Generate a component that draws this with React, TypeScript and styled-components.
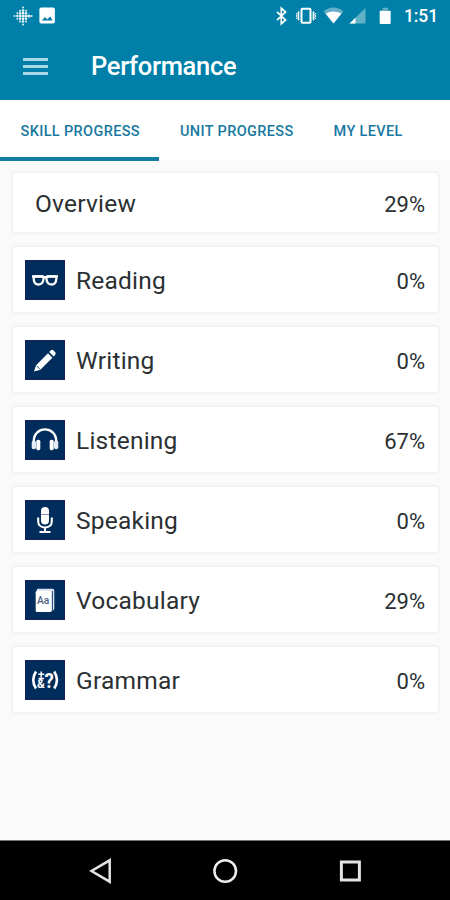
import React from 'react';
import styled, { createGlobalStyle } from 'styled-components';

const GlobalStyle = createGlobalStyle`
  *, *::before, *::after { box-sizing: border-box; }
  body { margin: 0; background: #fafafa; font-family: Roboto, sans-serif; }
`;

const Screen = styled.div`
  width: 450px;
  height: 900px;
  display: flex;
  flex-direction: column;
  overflow: hidden;
  background: #fafafa;
`;

const StatusBar = styled.header`
  height: 32px;
  flex: none;
  display: flex;
  align-items: center;
  padding: 0 13px 0 13px;
  background: #0080a9;
  color: #fff;
`;

const StatusIcons = styled.div<{ $push?: boolean }>`
  display: flex;
  align-items: center;
  height: 32px;
  margin-left: ${(p) => (p.$push ? 'auto' : '0')};
  svg { display: block; }
`;

const Clock = styled.span`
  width: 33px;
  margin-left: 11px;
  font-size: 17.5px;
  line-height: 32px;
  font-weight: 500;
  letter-spacing: -0.1px;
  white-space: nowrap;
`;

const AppBar = styled.div`
  height: 68px;
  flex: none;
  display: flex;
  align-items: center;
  padding: 0 23px;
  background: #0080a9;
`;

const MenuButton = styled.button`
  width: 25px;
  height: 17px;
  padding: 0;
  margin: 0 42px 0 0;
  border: 0;
  background: none;
  display: flex;
  flex-direction: column;
  justify-content: space-between;
`;

const MenuLine = styled.span`
  height: 3px;
  background: #a9d8e8;
`;

const Title = styled.h1`
  margin: 0;
  padding: 1px 0 0 1px;
  color: #fff;
  font-size: 25.5px;
  line-height: 67px;
  font-weight: 500;
  letter-spacing: -0.3px;
`;

const Tabs = styled.nav`
  height: 60px;
  flex: none;
  display: flex;
  background: #fff;
`;

const Tab = styled.button<{ $active?: boolean }>`
  height: 61px;
  padding: 4px 19.5px 0 20.5px;
  border: 0;
  border-bottom: 4px solid ${(p) => (p.$active ? '#147ca2' : 'transparent')};
  background: none;
  color: #1879a0;
  font: 500 14.5px/55px Roboto, sans-serif;
  letter-spacing: 0.36px;
  white-space: nowrap;
`;

const List = styled.main`
  flex: 1;
  display: flex;
  flex-direction: column;
  gap: 11px;
  padding: 11px 10px 0 11px;
`;

const Card = styled.section<{ $compact?: boolean }>`
  height: ${(p) => (p.$compact ? '63px' : '69px')};
  display: flex;
  align-items: center;
  padding: 1px 13px 0 ${(p) => (p.$compact ? '22px' : '12px')};
  border: 2px solid #f3f3f3;
  border-radius: 5px;
  background: #fff;
`;

const IconTile = styled.div`
  width: 40px;
  height: 40px;
  margin-right: 11px;
  background: #002d5b;
  border: 1px solid #15205c;
  svg { display: block; width: 38px; height: 38px; }
`;

const Label = styled.span`
  flex: 1;
  color: #2b3033;
  font-size: 24.5px;
  line-height: 30px;
  padding-top: 2px;
  letter-spacing: 0.22px;
`;

const Value = styled.span`
  color: #2b3033;
  font-size: 22px;
  line-height: 30px;
  padding-top: 4px;
`;

const NavBar = styled.footer`
  height: 60px;
  flex: none;
  display: flex;
  align-items: center;
  justify-content: space-between;
  padding: 0 87px;
  background: #000;
  border-top: 1px solid #777;
`;

const dots: [number, number, number][] = [
  [10, 1.5, 1], [10, 4.6, 1.3], [7, 7.2, 1.2], [10, 7.2, 1.4], [13, 7.2, 1.2],
  [1.5, 10, 1], [4.3, 10, 1.2], [7, 10, 1.4], [10, 10, 1.6], [13, 10, 1.6], [16, 10, 1.6], [18.6, 10, 1],
  [7, 12.8, 1.2], [10, 12.8, 1.4], [13, 12.8, 1.2], [10, 15.5, 1.3], [10, 18.5, 1],
  [7, 4.8, 1], [13, 4.8, 1], [7, 15.4, 1], [13, 15.4, 1], [4.3, 7.2, 0.9], [4.3, 12.8, 0.9],
];

const Glyphs: Record<string, React.ReactNode> = {
  Reading: (
    <g fill="none" stroke="#fff">
      <path d="M6 15.4h10q3 1.5 6 0h10" strokeWidth="2.2" />
      <path d="M8.5 15.5h8q1.4 0 1.1 2-.6 6-5.1 6T7.7 18q-.2-2.5.8-2.5zM21.5 15.5h8q1 0 .8 2.5-.3 5.5-4.8 5.5t-5.1-6q-.3-2 1.1-2z" strokeWidth="2.3" />
    </g>
  ),
  Writing: (
    <g fill="#fff">
      <path d="m8 30.5 2.1-6.2L22 12.3l4.4 4.4-12 12z" />
      <path d="m23.2 11.1 1.5-1.6q1.4-1.3 2.8 0l1.6 1.6q1.3 1.4 0 2.8l-1.5 1.6z" />
      <path d="m10.5 24.7 3.5 3.5" stroke="#002d5b" strokeWidth=".8" />
    </g>
  ),
  Listening: (
    <g fill="#fff">
      <path d="M7.8 23v-3C7.8 4.5 30.2 4.5 30.2 20v3" fill="none" stroke="#fff" strokeWidth="2.4" />
      <rect x="5.7" y="19.5" width="4.3" height="8.8" rx="2" fill="#e4e8f3" />
      <rect x="10.3" y="18.7" width="4" height="10.5" rx="1.6" />
      <rect x="23.7" y="18.7" width="4" height="10.5" rx="1.6" />
      <rect x="28" y="19.5" width="4.3" height="8.8" rx="2" fill="#e4e8f3" />
    </g>
  ),
  Speaking: (
    <g>
      <rect x="15" y="6" width="8" height="17.5" rx="4" fill="#fff" />
      <path d="M12.2 16.5v4c0 8 13.6 8 13.6 0v-4M19 26.5V31M13.5 31h11" fill="none" stroke="#fff" strokeWidth="2.1" />
      <path d="M15 13.5h8" stroke="#60769b" strokeWidth=".8" />
    </g>
  ),
  Vocabulary: (
    <g>
      <path d="M12 7.8h14.5q1.8 0 1.8 1.8v18q0 1.8-1.8 1.8H25V10H10.5q.1-2.2 1.5-2.2z" fill="#dbe0f2" />
      <rect x="9.7" y="9.7" width="15.9" height="21.2" rx="1.5" fill="#fff" />
      <path d="M26.4 10v19" stroke="#174374" />
      <text x="11" y="22.8" fill="#49617f" fontFamily="Roboto" fontSize="10.2" fontWeight="500">Aa</text>
    </g>
  ),
  Grammar: (
    <g fill="#fff" fontFamily="Roboto" fontWeight="700">
      <path d="M10 10.5q-5.5 8.5 0 17M28.2 10.5q5.5 8.5 0 17" fill="none" stroke="#fff" strokeWidth="2.6" />
      <path d="M15.2 10.5v6M12.3 13.3h6M12.5 17.5h5.5" stroke="#fff" strokeWidth="1.5" />
      <text x="11" y="27" fontSize="12">&amp;</text>
      <text x="18.6" y="26.8" fontSize="21" textLength="9.3" lengthAdjust="spacingAndGlyphs">?</text>
    </g>
  ),
};

const skills = [
  { name: 'Reading', value: '0%' },
  { name: 'Writing', value: '0%' },
  { name: 'Listening', value: '67%' },
  { name: 'Speaking', value: '0%' },
  { name: 'Vocabulary', value: '29%' },
  { name: 'Grammar', value: '0%' },
];

export default function App() {
  return (
    <Screen>
      <GlobalStyle />
      <StatusBar>
        <StatusIcons>
          <svg width="20" height="20" viewBox="0 0 20 20" fill="#e6f4fa">
            {dots.map(([x, y, r], i) => <circle key={i} cx={x} cy={y} r={r} />)}
          </svg>
          <svg width="22" height="20" viewBox="0 0 22 20">
            <rect x="6.4" y="1.5" width="15.5" height="16" rx="1.8" fill="#fff" />
            <path d="m8.8 14.5 3.2-3.5 2.2 2.2 3-2.8 2.5 4.1z" fill="#0080a9" />
          </svg>
        </StatusIcons>
        <StatusIcons $push>
          <svg width="120" height="24" viewBox="273.5 4 120 24" fill="none" stroke="#fff">
            <path d="m277.5 11.8 8.5 8.2-4.2 3.8V8.2l4.2 3.8-8.5 8.2" strokeWidth="1.7" />
            <rect x="302" y="8.8" width="9" height="14" rx="1" strokeWidth="2" />
            <path d="M299 11.5v8.8M314 11.5v8.8" strokeWidth="1.6" />
            <path d="m296.5 13 1.3 1.5-1.3 1.5 1.3 1.5-1.3 1.5M316.5 13l-1.3 1.5 1.3 1.5-1.3 1.5 1.3 1.5" strokeWidth="1" />
            <path d="M324 11.2q10-7.5 20 0L334 23.5z" fill="#63adc7" stroke="none" />
            <path d="M326 13.5q8-4.2 16 0l-8 10z" fill="#fff" stroke="none" />
            <path d="M366 8v15.5h-16z" fill="#61b1c7" stroke="none" />
            <path d="M356 17.7v5.8h-6z" fill="#fff" stroke="none" />
            <path d="M383 7.8h5.5v2.5h2.7V13h-11v-2.7h2.8z" fill="#63adc7" stroke="none" />
            <rect x="380.2" y="11" width="11" height="13" rx="1" fill="#fff" stroke="none" />
          </svg>
          <Clock>1:51</Clock>
        </StatusIcons>
      </StatusBar>
      <AppBar>
        <MenuButton aria-label="Menu"><MenuLine /><MenuLine /><MenuLine /></MenuButton>
        <Title>Performance</Title>
      </AppBar>
      <Tabs>
        <Tab $active>SKILL PROGRESS</Tab>
        <Tab>UNIT PROGRESS</Tab>
        <Tab>MY LEVEL</Tab>
      </Tabs>
      <List>
        <Card $compact><Label>Overview</Label><Value>29%</Value></Card>
        {skills.map((s) => (
          <Card key={s.name}>
            <IconTile><svg viewBox="0 0 38 38">{Glyphs[s.name]}</svg></IconTile>
            <Label>{s.name}</Label>
            <Value>{s.value}</Value>
          </Card>
        ))}
      </List>
      <NavBar>
        <svg width="26" height="28" viewBox="0 0 26 28" fill="none" stroke="#e3e3e3" strokeWidth="2.5"><path d="M22.7 3.3v21.4L4.5 14z" /></svg>
        <svg width="26" height="28" viewBox="0 0 26 28" fill="none" stroke="#eee" strokeWidth="2.5"><circle cx="13.2" cy="14" r="10.8" /></svg>
        <svg width="26" height="28" viewBox="0 0 26 28" fill="none" stroke="#e3e3e3" strokeWidth="3"><rect x="4.4" y="5" width="18" height="18" /></svg>
      </NavBar>
    </Screen>
  );
}
